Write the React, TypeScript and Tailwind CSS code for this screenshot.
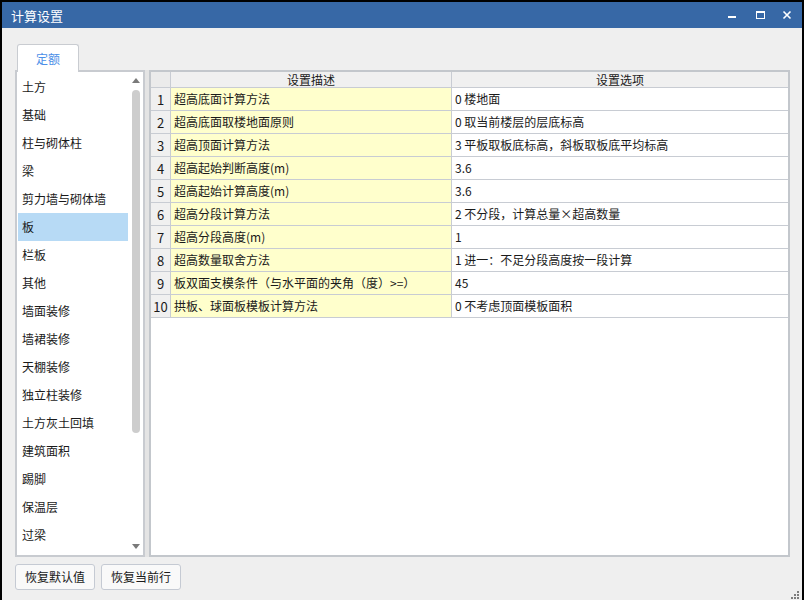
import React from "react";

const items = [
  "土方",
  "基础",
  "柱与砌体柱",
  "梁",
  "剪力墙与砌体墙",
  "板",
  "栏板",
  "其他",
  "墙面装修",
  "墙裙装修",
  "天棚装修",
  "独立柱装修",
  "土方灰土回填",
  "建筑面积",
  "踢脚",
  "保温层",
  "过梁",
];

const rows: [string, string][] = [
  ["超高底面计算方法", "0 楼地面"],
  ["超高底面取楼地面原则", "0 取当前楼层的层底标高"],
  ["超高顶面计算方法", "3 平板取板底标高，斜板取板底平均标高"],
  ["超高起始判断高度(m)", "3.6"],
  ["超高起始计算高度(m)", "3.6"],
  ["超高分段计算方法", "2 不分段，计算总量×超高数量"],
  ["超高分段高度(m)", "1"],
  ["超高数量取舍方法", "1 进一：不足分段高度按一段计算"],
  ["板双面支模条件（与水平面的夹角（度）>=）", "45"],
  ["拱板、球面板模板计算方法", "0 不考虑顶面模板面积"],
];

const font = { fontFamily: '"Noto Sans CJK SC", "Noto Sans", sans-serif' };

export default function App() {
  return (
    <div className="w-[804px] h-[600px] bg-black pt-[2px] px-[2px] overflow-hidden" style={font}>
      <div className="relative flex flex-col h-[598px] bg-[#efefef]">
        {/* title bar */}
        <div className="h-[26px] bg-[#3768a6] flex items-center pl-[9px] pr-[10px] text-white text-[13px] leading-none">
          <span>计算设置</span>
          <div className="ml-auto flex items-center">
            <svg width="10" height="10" viewBox="0 0 10 10" className="mr-[18px]">
              <rect x="1" y="6" width="8" height="2" fill="#fff" />
            </svg>
            <svg width="10" height="10" viewBox="0 0 10 10" className="mr-[17px]">
              <rect x="1.5" y="1.5" width="8" height="7" fill="none" stroke="#fff" strokeWidth="1" />
              <rect x="1" y="1" width="9" height="2" fill="#fff" />
            </svg>
            <svg width="10" height="10" viewBox="0 0 10 10">
              <path d="M1.5 1.5 L8.5 8.5 M8.5 1.5 L1.5 8.5" stroke="#fff" strokeWidth="1.6" />
            </svg>
          </div>
        </div>

        {/* tabs */}
        <div className="pl-[15px] pt-[16px] flex">
          <div className="w-[62px] h-[28px] bg-white border border-b-0 border-[#c9ccd1] rounded-t-[3px] flex items-center justify-center text-[12px] text-[#4c8fe8] relative z-10 -mb-[1px]">
            定额
          </div>
        </div>

        {/* content */}
        <div className="flex pl-[13px] pr-[12px] h-[487px] -mt-[1px]">
          {/* list */}
          <div className="w-[130px] h-full border-2 border-[#c8cbd0] bg-white flex">
            <div className="w-[111px] pt-[1px] pl-[1px]">
              {items.map((it, i) => (
                <div
                  key={it}
                  className={`h-[28px] flex items-center pl-[4px] text-[12px] text-[#1a1a1a] ${i === 5 ? "bg-[#b7daf5]" : ""}`}
                >
                  {it}
                </div>
              ))}
            </div>
            <div className="flex-1 flex flex-col items-center pt-[6px] pb-[6px]">
              <svg width="8" height="5" viewBox="0 0 8 5">
                <path d="M0 5 L4 0 L8 5 Z" fill="#7a7a7a" />
              </svg>
              <div className="w-[8px] h-[343px] mt-[7px] rounded-full bg-[#cdcdcd] ml-[1px]" />
              <div className="flex-1" />
              <svg width="8" height="5" viewBox="0 0 8 5">
                <path d="M0 0 L8 0 L4 5 Z" fill="#7a7a7a" />
              </svg>
            </div>
          </div>

          {/* splitter */}
          <div className="w-[4px] h-full bg-[#e4e4e4]" />

          {/* grid */}
          <div className="flex-1 h-full border-2 border-[#c3c7cc] bg-white">
            <div className="grid grid-cols-[20px_281px_1fr] text-[12px] text-[#1a1a1a]">
              <div className="h-[16px] bg-[#ebebeb] border-r border-b border-[#c8ccd3]" />
              <div className="h-[16px] bg-[#f0f0f0] border-r border-b border-[#c8ccd3] flex items-center justify-center leading-none">
                设置描述
              </div>
              <div className="h-[16px] bg-[#f0f0f0] border-b border-[#c8ccd3] flex items-center justify-center leading-none">
                设置选项
              </div>
              {rows.map(([d, o], i) => (
                <React.Fragment key={i}>
                  <div className="h-[23px] bg-[#f0f0f0] border-r border-b border-[#c8ccd3] flex items-center justify-center text-[13px] leading-none">
                    {i + 1}
                  </div>
                  <div className="h-[23px] bg-[#ffffcc] border-r border-b border-[#c8ccd3] flex items-center pl-[3px] leading-none whitespace-nowrap">
                    {d}
                  </div>
                  <div className="h-[23px] bg-white border-b border-[#c8ccd3] flex items-center pl-[3px] leading-none whitespace-nowrap">
                    {o}
                  </div>
                </React.Fragment>
              ))}
            </div>
          </div>
        </div>

        {/* buttons */}
        <div className="flex pl-[13px] pt-[7px] gap-[6px]">
          <button className="w-[80px] h-[26px] bg-[#f9f9f9] border border-[#c5cad3] rounded-[3px] text-[12px] text-[#1a1a1a] leading-none">
            恢复默认值
          </button>
          <button className="w-[80px] h-[26px] bg-[#f9f9f9] border border-[#c5cad3] rounded-[3px] text-[12px] text-[#1a1a1a] leading-none">
            恢复当前行
          </button>
        </div>

        {/* resize grip */}
        <svg width="10" height="10" viewBox="0 0 10 10" className="absolute right-[2px] bottom-[0px]">
          <rect x="7" y="1" width="2" height="2" fill="#7d7d7d" />
          <rect x="4" y="4" width="2" height="2" fill="#7d7d7d" />
          <rect x="7" y="4" width="2" height="2" fill="#7d7d7d" />
          <rect x="1" y="7" width="2" height="2" fill="#7d7d7d" />
          <rect x="4" y="7" width="2" height="2" fill="#7d7d7d" />
          <rect x="7" y="7" width="2" height="2" fill="#7d7d7d" />
        </svg>
      </div>
    </div>
  );
}
